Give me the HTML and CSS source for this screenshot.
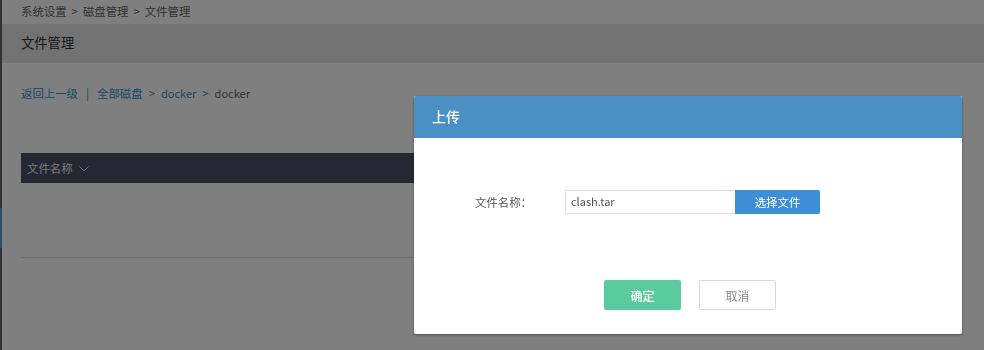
FILE: index.html
```html
<!DOCTYPE html>
<html lang="zh">
<head>
<meta charset="utf-8">
<title>文件管理</title>
<link rel="stylesheet" href="styles.css">
</head>
<body>
<div class="app">
  <aside class="sidebar">
    <div class="side-item active"></div>
  </aside>
  <main class="main">
    <div class="crumbs">
      <span>系统设置</span><span class="cg">&gt;</span><span>磁盘管理</span><span class="cg">&gt;</span><span>文件管理</span>
    </div>
    <div class="page-title">文件管理</div>
    <div class="content">
      <div class="path">
        <a class="link">返回上一级</a>
        <span class="sep">|</span>
        <a class="link">全部磁盘</a>
        <span class="gt">&gt;</span>
        <a class="link latin">docker</a>
        <span class="gt">&gt;</span>
        <span class="cur latin">docker</span>
      </div>
      <div class="table">
        <div class="thead">
          <span class="th">文件名称</span>
          <svg class="chev" width="10" height="6" viewBox="0 0 10 6"><path d="M0.5 0.5 L5 5 L9.5 0.5" fill="none" stroke="currentColor" stroke-width="1"/></svg>
        </div>
        <div class="tbody"></div>
      </div>
    </div>
  </main>
</div>

<div class="overlay"></div>

<div class="dialog">
  <div class="dialog-head">上传</div>
  <div class="dialog-body">
    <div class="form-row">
      <label class="label">文件名称：</label>
      <div class="file-field">
        <div class="file-input">clash.tar</div>
        <button class="btn-pick">选择文件</button>
      </div>
    </div>
  </div>
  <div class="dialog-foot">
    <button class="btn btn-ok">确定</button>
    <button class="btn btn-cancel">取消</button>
  </div>
</div>
</body>
</html>
```

FILE: styles.css
```css
* { box-sizing: border-box; }
html, body { margin: 0; padding: 0; }
body {
  width: 984px;
  height: 350px;
  overflow: hidden;
  font-family: "Noto Sans CJK SC", "Open Sans", sans-serif;
  background: #fff;
  color: #333;
}
.app {
  display: flex;
  height: 350px;
}
.sidebar {
  width: 2px;
  background: #5e6266;
  display: flex;
  flex-direction: column;
  padding-top: 208px;
}
.side-item.active {
  height: 40px;
  background: #4f9edb;
}
.main {
  flex: 1;
  background: #fff;
}
.crumbs {
  height: 24px;
  line-height: 22px;
  padding-left: 19px;
  font-size: 11.4px;
  color: #666;
  display: flex;
}
.cg {
  padding: 0 5px;
}
.page-title {
  height: 39px;
  line-height: 38px;
  background: #e5e5e5;
  padding-left: 19px;
  font-size: 13.3px;
  color: #333;
}
.content {
  padding: 0 22px 0 19px;
}
.path {
  margin-top: 21px;
  height: 18px;
  line-height: 18px;
  font-size: 11.4px;
  display: flex;
  gap: 6px;
  color: #555;
}
.latin { font-size: 11px; }
.link { color: #3392d8; }
.sep { color: #3392d8; padding: 0 2px; }
.gt { color: #3392d8; }
.cur { color: #666; }
.table {
  margin-top: 51px;
}
.thead {
  height: 30px;
  background: #4a4e66;
  display: flex;
  align-items: center;
  padding-left: 6px;
  gap: 6px;
  color: #f2f2f2;
  font-size: 11.4px;
}
.chev { color: #e0e0e0; margin-top: 1px; }
.tbody {
  height: 75px;
  border-bottom: 1px solid #e0e0e0;
}
.overlay {
  position: fixed;
  inset: 0;
  background: rgba(0,0,0,0.5);
}
.dialog {
  position: fixed;
  left: 414px;
  top: 96px;
  width: 548px;
  height: 238px;
  background: #fff;
  border-radius: 2px;
  box-shadow: 0 1px 3px rgba(0,0,0,0.35);
  display: flex;
  flex-direction: column;
  overflow: hidden;
}
.dialog-head {
  height: 42px;
  line-height: 40px;
  background: #4a90c4;
  color: #fff;
  font-size: 14px;
  font-weight: 500;
  padding-left: 18px;
}
.dialog-body {
  padding-top: 52px;
  height: 142px;
}
.form-row {
  display: flex;
  align-items: center;
  height: 24px;
}
.label {
  width: 151px;
  padding-left: 61px;
  font-size: 11.4px;
  color: #555;
}
.file-field {
  display: flex;
  height: 24px;
}
.file-input {
  width: 170px;
  height: 24px;
  border: 1px solid #dcdcdc;
  border-right: none;
  border-radius: 2px 0 0 2px;
  font-size: 11px;
  line-height: 21px;
  padding-left: 5px;
  color: #555;
}
.btn-pick {
  width: 85px;
  height: 24px;
  border: none;
  border-radius: 0 2px 2px 0;
  background: #3d8ed6;
  color: #fff;
  font-family: inherit;
  font-size: 11.4px;
  padding: 0;
}
.dialog-foot {
  display: flex;
  justify-content: center;
  gap: 18px;
  padding-left: 4px;
}
.btn {
  width: 77px;
  height: 30px;
  border-radius: 2px;
  font-family: inherit;
  font-size: 12px;
  padding: 0;
}
.btn-ok {
  background: #5acb9f;
  border: none;
  color: #fff;
  font-weight: 500;
}
.btn-cancel {
  background: #fff;
  border: 1px solid #d9d9d9;
  color: #888;
}
```
